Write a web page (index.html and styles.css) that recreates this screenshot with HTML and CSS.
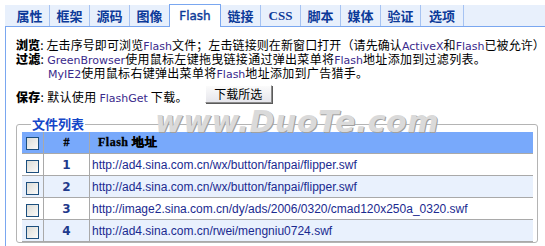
FILE: index.html
```html
<!DOCTYPE html>
<html>
<head>
<meta charset="utf-8">
<link rel="stylesheet" href="styles.css">
</head>
<body>
<div class="frame">
  <div class="tabs">
    <span class="tab first">属性</span>
    <span class="tab">框架</span>
    <span class="tab">源码</span>
    <span class="tab">图像</span>
    <span class="tab active">Flash</span>
    <span class="tab">链接</span>
    <span class="tab latin">CSS</span>
    <span class="tab">脚本</span>
    <span class="tab">媒体</span>
    <span class="tab">验证</span>
    <span class="tab">选项</span>
  </div>
  <div class="panel">
    <div class="info">
      <div class="line first-line"><b>浏览</b>: 左击序号即可浏览<span class="en">Flash</span>文件；左击链接则在新窗口打开（请先确认<span class="en">ActiveX</span>和<span class="en">Flash</span>已被允许）</div>
      <div class="line"><b>过滤</b>: <span class="en">GreenBrowser</span>使用鼠标左键拖曳链接通过弹出菜单将<span class="en">Flash</span>地址添加到过滤列表。</div>
      <div class="line indent"><span class="en">MyIE2</span>使用鼠标右键弹出菜单将<span class="en">Flash</span>地址添加到广告猎手。</div>
      <div class="line save"><b>保存</b>: 默认使用 <span class="en">FlashGet</span> 下载。<button class="btn">下载所选</button></div>
    </div>
    <fieldset class="files">
      <legend>文件列表</legend>
      <table class="list">
        <thead>
          <tr><th class="c-chk"><span class="chk"></span></th><th class="c-num">#</th><th class="c-url">Flash 地址</th></tr>
        </thead>
        <tbody>
          <tr><td class="c-chk"><span class="chk"></span></td><td class="c-num">1</td><td class="c-url">http://ad4.sina.com.cn/wx/button/fanpai/flipper.swf</td></tr>
          <tr class="alt"><td class="c-chk"><span class="chk"></span></td><td class="c-num">2</td><td class="c-url">http://ad4.sina.com.cn/wx/button/fanpai/flipper.swf</td></tr>
          <tr><td class="c-chk"><span class="chk"></span></td><td class="c-num">3</td><td class="c-url">http://image2.sina.com.cn/dy/ads/2006/0320/cmad120x250a_0320.swf</td></tr>
          <tr class="alt"><td class="c-chk"><span class="chk"></span></td><td class="c-num">4</td><td class="c-url">http://ad4.sina.com.cn/rwei/mengniu0724.swf</td></tr>
        </tbody>
      </table>
    </fieldset>
  </div>
  <div class="watermark">www.DuoTe.com</div>
</div>
</body>
</html>
```
FILE: styles.css
```css
html, body {
  margin: 0;
  padding: 0;
  background: #ffffff;
  overflow: hidden;
}
body {
  font-family: "Noto Sans CJK SC", "Liberation Sans", sans-serif;
  font-size: 12px;
  color: #000;
}
.frame {
  position: relative;
  width: 545px;
  height: 246px;
  padding-top: 5px;
  box-sizing: border-box;
}
.tabs {
  display: flex;
  height: 21px;
  margin-left: 5px;
  background: #e8f0fc;
  border-bottom: 1px solid #7aa7f0;
}
.tab {
  flex: 0 0 auto;
  display: flex;
  align-items: center;
  justify-content: center;
  padding: 0;
  width: 40px;
  height: 21px;
  font-size: 13px;
  font-weight: bold;
  color: #0c3a99;
  border-right: 1px solid #a6c3f2;
  line-height: 1;
  white-space: nowrap;
  box-sizing: border-box;
}
.tab.first {
  width: 45px;
  padding-left: 5px;
}
.tab.latin {
  font-family: "Liberation Serif", serif;
  font-size: 13px;
}
.tab.active {
  font-family: "DejaVu Sans", "Liberation Sans", sans-serif;
  font-size: 12px;
  width: 52px;
  background: #ffffff;
  border: 1px solid #7aa7f0;
  border-bottom: none;
  height: 23px;
  margin-top: -1px;
  margin-left: -1px;
  padding-bottom: 1px;
  font-weight: normal;
  -webkit-text-stroke: 0.4px #0c3a99;
}
.tab:last-child {
  width: 43px;
}
.panel {
  margin-left: 5px;
  border-left: 1px solid #7aa7f0;
  height: 220px;
  padding: 11px 0 0 10px;
  box-sizing: border-box;
}
.info {
  line-height: 14px;
}
.line {
  height: 14px;
  white-space: nowrap;
  font-size: 12px;
  letter-spacing: 0.3px;
}
.line.first-line {
  letter-spacing: 0.1px;
}
.line b {
  font-weight: 900;
}
.en {
  font-family: "DejaVu Sans", "Liberation Sans", sans-serif;
  font-size: 11px;
  letter-spacing: 0;
  color: #3a2a8c;
}
.indent {
  padding-left: 32px;
}
.save {
  margin-top: 5px;
  height: 20px;
  line-height: 20px;
}
.btn {
  margin-left: 17px;
  vertical-align: 3px;
  width: 67px;
  height: 18px;
  padding: 0;
  font-family: "Noto Sans CJK SC", sans-serif;
  font-size: 12px;
  letter-spacing: 0;
  line-height: 14px;
  color: #000;
  background: linear-gradient(#fbfbfb, #e6e6ec);
  border: 1px solid;
  border-color: #ffffff #8c8c8c #8c8c8c #ffffff;
  box-shadow: 1px 1px 0 #5a5a5a;
}
.files {
  margin: 12px 0 0 0;
  width: 521px;
  box-sizing: border-box;
  padding: 0 4px 0 5px;
  border: 1px solid #b4b4b4;
  border-radius: 3px;
}
.files legend {
  padding: 0 1px;
  margin-left: 9px;
  font-weight: bold;
  font-size: 13px;
  color: #1446c8;
  line-height: 14px;
}
.list {
  width: 511px;
  border-collapse: collapse;
  margin-top: 1px;
}
.list th, .list td {
  height: 21px;
  padding: 0;
  border-bottom: 1px solid #a9a9a9;
}
.list th {
  background: #78a9fb;
  font-family: "Liberation Serif", serif;
  font-weight: bold;
  font-size: 12px;
  color: #000;
  -webkit-text-stroke: 0.3px #000;
}
.list th.c-url {
  text-align: left;
  padding-left: 8px;
  letter-spacing: 0.5px;
}
.c-chk {
  width: 21px;
  text-align: center;
  border-right: 1px solid #a9a9a9;
}
.c-num {
  width: 45px;
  text-align: center;
  border-right: 1px solid #a9a9a9;
}
td.c-num {
  font-family: "DejaVu Sans", sans-serif;
  font-size: 12px;
  font-weight: bold;
  color: #1f3a8c;
}
td.c-url {
  padding-left: 2px;
  font-family: "Liberation Sans", Arial, sans-serif;
  font-size: 12px;
  color: #1a2a90;
  white-space: nowrap;
}
.alt td {
  background: #e9f1fd;
}
.chk {
  display: inline-block;
  width: 11px;
  height: 11px;
  vertical-align: middle;
  border: 1px solid #1c4f7e;
  background: linear-gradient(135deg, #dcdcd6, #fafafa);
}
.watermark {
  position: absolute;
  left: 155px;
  top: 104px;
  font-family: "DejaVu Sans", sans-serif;
  font-size: 30px;
  font-weight: bold;
  font-style: italic;
  color: #dadada;
  letter-spacing: 0.5px;
  text-shadow: 1px 1px 0 #a0a0a0;
  pointer-events: none;
}
```
